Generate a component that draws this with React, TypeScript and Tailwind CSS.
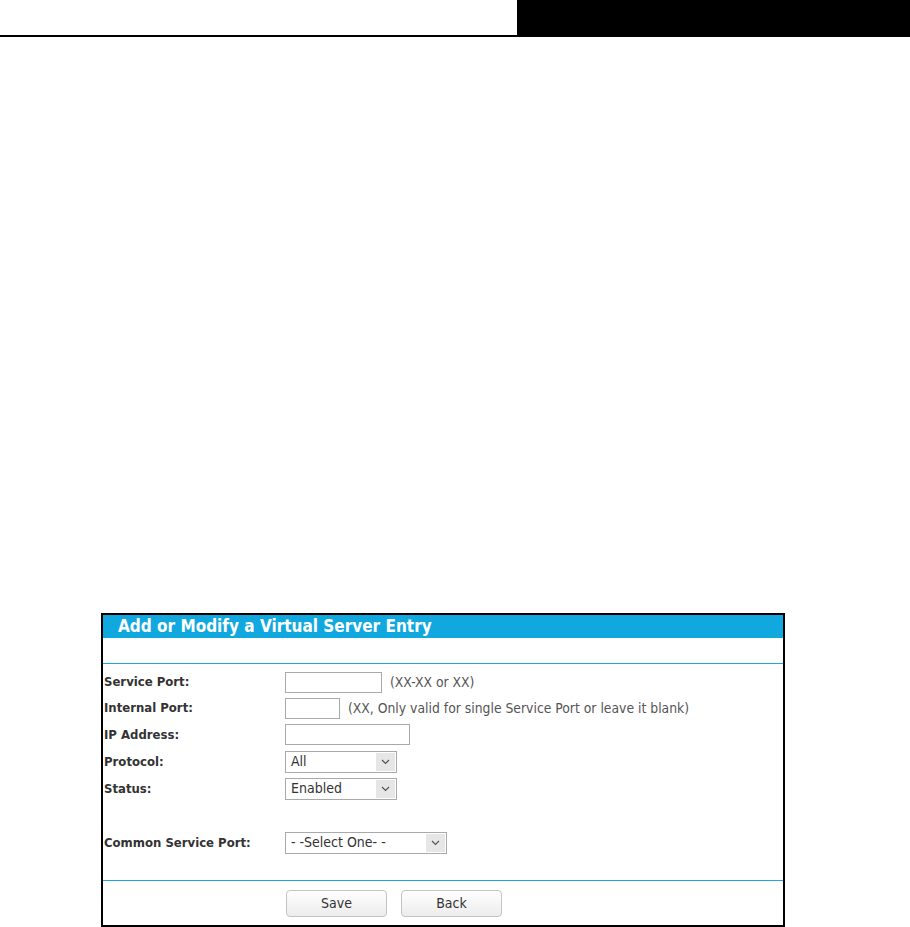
import { ReactNode } from "react";

const font = { fontFamily: '"DejaVu Sans Condensed", "DejaVu Sans", Verdana, sans-serif' };

interface IRowProps {
  label: string;
  tall?: boolean;
  children?: ReactNode;
}

const Row = ({ label, tall, children }: IRowProps) => (
  <div className={`flex items-center ${tall ? "h-[27px]" : "h-[26px]"}`}>
    <div className="w-[182px] pl-px text-[13px] font-bold text-[#333]">{label}</div>
    <div className="flex items-center">{children}</div>
  </div>
);

const TextBox = ({ width }: { width: string }) => (
  <div className={`${width} h-[21px] border border-[#a9a9a9] bg-white`} />
);

const Chevron = () => (
  <svg width="9" height="6" viewBox="0 0 9 6" fill="none">
    <path d="M1 1l3.5 3.5L8 1" stroke="#555" strokeWidth="1.2" />
  </svg>
);

const SelectBox = ({ value, width }: { value: string; width: string }) => (
  <div
    className={`${width} flex h-[22px] items-center border border-[#a9a9a9] bg-white`}
  >
    <span className="flex-1 pl-[5px] text-[14px] text-[#333]">{value}</span>
    <div className="mr-px flex h-[18px] w-[19px] items-center justify-center bg-[#e6e6e6]">
      <Chevron />
    </div>
  </div>
);

const Note = ({ text }: { text: string }) => (
  <span className="ml-[8px] text-[13.8px] text-[#555]">{text}</span>
);

const Btn = ({ text }: { text: string }) => (
  <button className="h-[27px] w-[101px] rounded-[4px] border border-[#c4c4c4] bg-gradient-to-b from-white to-[#ececec] text-[14px] text-[#333]">
    {text}
  </button>
);

const BlueLine = () => <div className="h-px bg-[#1ba8e0]" />;

const App = () => {
  return (
    <div className="h-[927px] w-[910px] overflow-hidden bg-white" style={font}>
      <div className="flex h-[37px]">
        <div className="flex-1 border-b-2 border-black" />
        <div className="w-[393px] bg-black" />
      </div>

      <div className="ml-[101px] mt-[576px] w-[684px] border-2 border-black">
        <div className="flex h-[23px] items-center bg-[#11a8df] pl-[15px] text-[17px] font-bold text-white">
          Add or Modify a Virtual Server Entry
        </div>
        <div className="h-[25px]" />
        <BlueLine />

        <div className="pt-[5px]">
          <Row label="Service Port:">
            <TextBox width="w-[97px]" />
            <Note text="(XX-XX or XX)" />
          </Row>
          <Row label="Internal Port:">
            <TextBox width="w-[55px]" />
            <Note text="(XX, Only valid for single Service Port or leave it blank)" />
          </Row>
          <Row label="IP Address:" tall>
            <TextBox width="w-[125px]" />
          </Row>
          <Row label="Protocol:" tall>
            <SelectBox value="All" width="w-[112px]" />
          </Row>
          <Row label="Status:" tall>
            <SelectBox value="Enabled" width="w-[112px]" />
          </Row>
          <div className="h-[27px]" />
          <Row label="Common Service Port:" tall>
            <SelectBox value="- -Select One- -" width="w-[162px]" />
          </Row>
        </div>

        <div className="h-[24px]" />
        <BlueLine />

        <div className="flex gap-[14px] pb-[8px] pl-[183px] pt-[9px]">
          <Btn text="Save" />
          <Btn text="Back" />
        </div>
      </div>
    </div>
  );
};

export default App;
